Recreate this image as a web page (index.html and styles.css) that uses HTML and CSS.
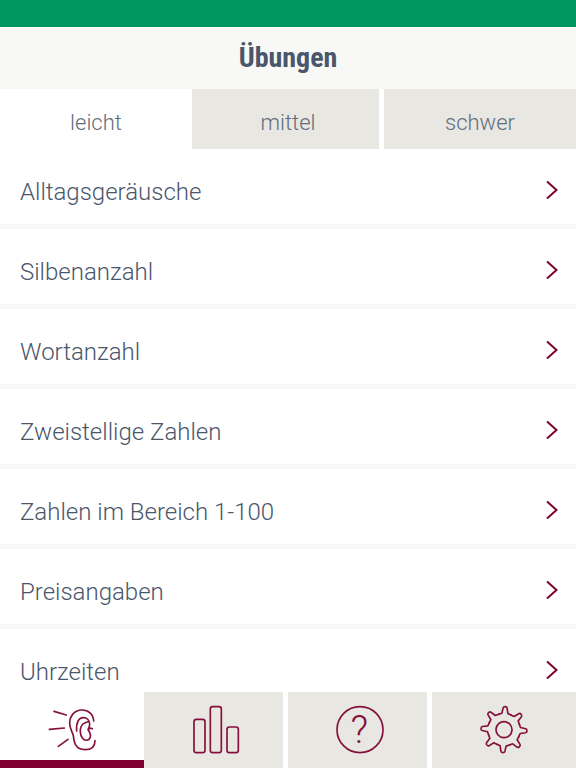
FILE: index.html
```html
<!DOCTYPE html>
<html lang="de">
<head>
  <meta charset="utf-8">
  <meta name="viewport" content="width=device-width, initial-scale=1">
  <title>Übungen</title>
  <link rel="stylesheet" href="styles.css">
</head>
<body>
  <header>
    <h1>Übungen</h1>
  </header>

  <div class="tabs">
    <button type="button" class="active">leicht</button>
    <button type="button">mittel</button>
    <button type="button">schwer</button>
  </div>

  <main>
    <ul class="exercises">
      <li><a href="#">Alltagsgeräusche <svg class="arrow" viewBox="0 0 12 20"><path d="M1 1.500L10.500 10L1 18.500"/></svg></a></li>
      <li><a href="#">Silbenanzahl <svg class="arrow" viewBox="0 0 12 20"><path d="M1 1.500L10.500 10L1 18.500"/></svg></a></li>
      <li><a href="#">Wortanzahl <svg class="arrow" viewBox="0 0 12 20"><path d="M1 1.500L10.500 10L1 18.500"/></svg></a></li>
      <li><a href="#">Zweistellige Zahlen <svg class="arrow" viewBox="0 0 12 20"><path d="M1 1.500L10.500 10L1 18.500"/></svg></a></li>
      <li><a href="#">Zahlen im Bereich 1-100 <svg class="arrow" viewBox="0 0 12 20"><path d="M1 1.500L10.500 10L1 18.500"/></svg></a></li>
      <li><a href="#">Preisangaben <svg class="arrow" viewBox="0 0 12 20"><path d="M1 1.500L10.500 10L1 18.500"/></svg></a></li>
      <li><a href="#">Uhrzeiten <svg class="arrow" viewBox="0 0 12 20"><path d="M1 1.500L10.500 10L1 18.500"/></svg></a></li>
    </ul>
  </main>

  <nav>
    <a href="#" class="active" aria-label="Übungen">
      <svg class="icon" viewBox="141 75 150 150">
        <path d="M162 94L199 105M148 148L193 144M175 199L204 178"/>
        <path d="M281 123C280 102 265 90 246 90C224 90 209 108 209 130C209 147 217 155 220 167C222 185 225 209 255 209C275 209 285 198 285 182"/>
        <path d="M230 153C228 128 236 113 250 113C261 113 269 121 269 133C269 140 265 144 266 151C268 158 273 162 271 170C267 184 254 183 247 174C240 165 239 148 244 138C249 127 260 129 266 123"/>
        <path d="M264 149C265 144 270 143 277 146"/>
      </svg>
    </a>
    <a href="#" aria-label="Statistik">
      <svg class="icon" viewBox="153 75 150 150">
        <rect x="162" y="118" width="33" height="100" rx="7"/>
        <rect x="211" y="80" width="33" height="138" rx="7"/>
        <rect x="261" y="141" width="34" height="77" rx="7"/>
      </svg>
    </a>
    <a href="#" aria-label="Hilfe">
      <svg class="icon" viewBox="150 75 150 150">
        <circle cx="225" cy="149" r="69"/>
        <text x="223" y="188" text-anchor="middle">?</text>
      </svg>
    </a>
    <a href="#" aria-label="Einstellungen">
      <svg class="icon" viewBox="159 75 150 150">
        <defs>
          <path id="tooth" d="M-19 -45L-9 -49L-6 -65Q-5 -69 0 -69Q5 -69 6 -65L9 -49L19 -45"/>
        </defs>
        <g transform="translate(234 149) rotate(3)">
          <circle r="24"/>
          <use href="#tooth"/>
          <use href="#tooth" transform="rotate(45)"/>
          <use href="#tooth" transform="rotate(90)"/>
          <use href="#tooth" transform="rotate(135)"/>
          <use href="#tooth" transform="rotate(180)"/>
          <use href="#tooth" transform="rotate(225)"/>
          <use href="#tooth" transform="rotate(270)"/>
          <use href="#tooth" transform="rotate(315)"/>
        </g>
      </svg>
    </a>
  </nav>
</body>
</html>
```
FILE: styles.css
```css
* {
  box-sizing: border-box;
}

body {
  display: flex;
  flex-direction: column;
  height: 100vh;
  margin: 0;
  background-color: #fff;
  color: #4a566a;
  font-family: Roboto, "Open Sans", sans-serif;
  font-weight: 300;
}

header {
  border-top: 27px solid #009661; /* Green status bar */
  background-color: #f8f8f6;
  text-align: center;
}

header h1 {
  margin: 0;
  padding: 15px 0;
  font-family: "Liberation Sans Narrow", "Roboto Condensed", "Open Sans Condensed", Roboto, sans-serif;
  font-size: 28px;
  line-height: 32px;
}

.tabs {
  display: grid;
  grid-template-columns: repeat(3, 1fr);
}

.tabs button {
  height: 60px;
  padding: 6px 0 0;
  border: none;
  background-color: #e8e7e2;
  box-shadow: inset -5px 0 #fff; /* White gap between the tabs */
  color: #626d7d;
  font: inherit;
  font-size: 22px;
  cursor: pointer;
}

.tabs button:last-child,
nav a:last-child {
  box-shadow: none;
}

.tabs .active,
nav .active {
  background-color: #fff;
}

main {
  flex: 1;
  min-height: 0;
  overflow: hidden;
}

.exercises {
  margin: 0;
  padding: 0;
  list-style: none;
}

.exercises a {
  display: flex;
  align-items: center;
  justify-content: space-between;
  height: 80px;
  padding: 10px 18px 0 20px;
  border-bottom: 5px solid #f8f8f7;
  color: inherit;
  font-size: 24px;
  text-decoration: none;
}

.arrow {
  width: 12px;
  height: 20px;
  margin-bottom: 4px;
  fill: none;
  stroke: #800031;
  stroke-width: 2;
}

nav {
  display: grid;
  grid-template-columns: repeat(4, 1fr);
}

nav a {
  display: flex;
  align-items: center;
  justify-content: center;
  height: 76px;
  background-color: #e8e7e2;
  box-shadow: inset -5px 0 #fff;
}

nav .active {
  box-shadow: inset 0 -8px #800031;
}

.icon {
  width: 50px;
  height: 50px;
  fill: none;
  stroke: #85103d;
  stroke-width: 5;
  stroke-linecap: round;
  stroke-linejoin: round;
}

.icon text {
  fill: #85103d;
  stroke: none;
  font-family: Roboto, sans-serif;
  font-size: 116px;
  font-weight: 300;
}
```
